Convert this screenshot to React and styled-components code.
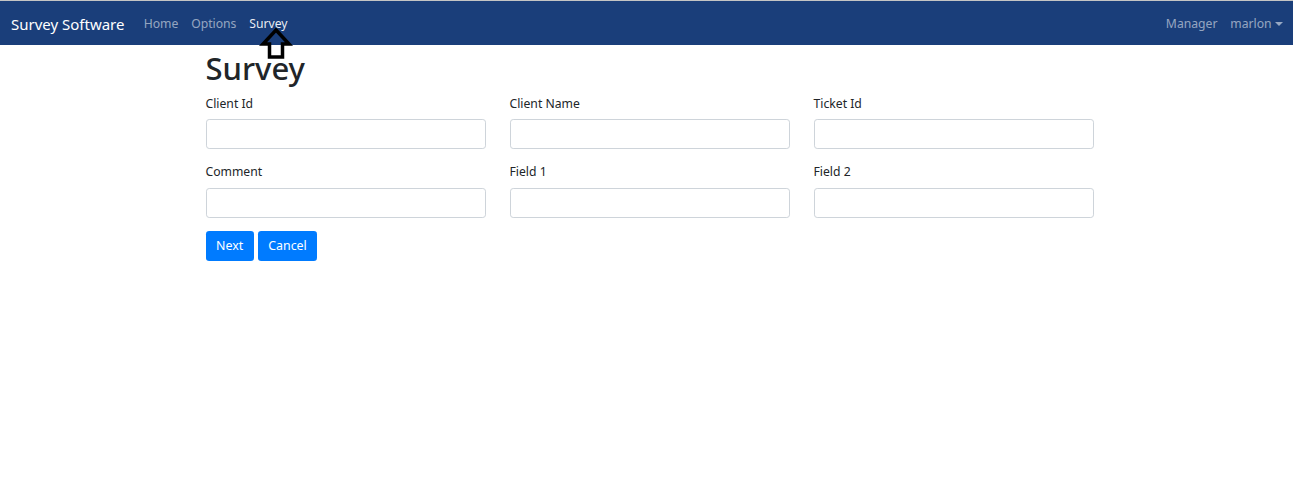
import React from 'react';
import styled, { createGlobalStyle } from 'styled-components';

const GlobalStyle = createGlobalStyle`
  * { box-sizing: border-box; }
  body {
    margin: 0;
    background: #fff;
    color: #212529;
    font-family: "Noto Sans", "Open Sans", sans-serif;
    font-size: 12.2px;
    line-height: 1.5;
  }
`;

const Page = styled.div`
  position: relative;
  border-top: 1px solid #c4c4c4;
`;

const NavBar = styled.nav`
  display: flex;
  align-items: center;
  height: 44px;
  padding: 3px 4px 0 11px;
  background: #1a3e7a;
`;

const Brand = styled.a`
  color: #fff;
  font-size: 15px;
  margin-right: 12.8px;
  white-space: nowrap;
`;

const NavList = styled.div`
  display: flex;
  align-items: center;
`;

const NavLink = styled.a`
  padding: 0 6.4px;
  font-size: 12.2px;
  white-space: nowrap;
  color: ${p => (p.$active ? 'rgba(255,255,255,0.92)' : 'rgba(255,255,255,0.55)')};
`;

const Spacer = styled.div`
  flex: 1;
`;

const Caret = styled.span`
  display: inline-block;
  margin-left: 3px;
  vertical-align: 2px;
  border-top: 4px solid rgba(255,255,255,0.55);
  border-left: 4px solid transparent;
  border-right: 4px solid transparent;
`;

const Container = styled.main`
  width: 896px;
  margin: 0 auto;
  padding: 4px 0 0 7px;
`;

const Title = styled.h1`
  margin: 0 0 6.4px;
  font-size: 31px;
  font-weight: 500;
  line-height: 38.4px;
`;

const FormGrid = styled.div`
  display: grid;
  grid-template-columns: repeat(3, 280px);
  column-gap: 24px;
`;

const FormGroup = styled.div`
  margin-bottom: 12.8px;
`;

const Label = styled.label`
  display: block;
  margin-bottom: 6.4px;
  font-size: 12.2px;
  line-height: 19.2px;
`;

const Input = styled.input`
  display: block;
  width: 100%;
  height: 30px;
  border: 1px solid #ced4da;
  border-radius: 3.2px;
  background: #fff;
`;

const Actions = styled.div`
  display: flex;
  gap: 4px;
`;

const Button = styled.button`
  height: 30px;
  padding: 0 10.5px;
  border: none;
  border-radius: 3.2px;
  background: #007bff;
  color: #fff;
  font-family: inherit;
  font-size: 12.4px;
`;

const Pointer = styled.svg`
  position: absolute;
  left: 258px;
  top: 25px;
`;

const fields = ['Client Id', 'Client Name', 'Ticket Id', 'Comment', 'Field 1', 'Field 2'];

export default function App() {
  return (
    <Page>
      <GlobalStyle />
      <NavBar>
        <Brand>Survey Software</Brand>
        <NavList>
          <NavLink>Home</NavLink>
          <NavLink>Options</NavLink>
          <NavLink $active>Survey</NavLink>
        </NavList>
        <Spacer />
        <NavList>
          <NavLink>Manager</NavLink>
          <NavLink>
            marlon<Caret />
          </NavLink>
        </NavList>
      </NavBar>
      <Container>
        <Title>Survey</Title>
        <FormGrid>
          {fields.map(f => (
            <FormGroup key={f}>
              <Label>{f}</Label>
              <Input />
            </FormGroup>
          ))}
        </FormGrid>
        <Actions>
          <Button>Next</Button>
          <Button>Cancel</Button>
        </Actions>
      </Container>
      <Pointer width="36" height="36" viewBox="0 0 36 36">
        <polygon
          points="18,4 31,18 24.5,18 24.5,31 11.5,31 11.5,18 5,18"
          fill="none"
          stroke="#000"
          strokeWidth="3.5"
          strokeLinejoin="miter"
        />
      </Pointer>
    </Page>
  );
}
